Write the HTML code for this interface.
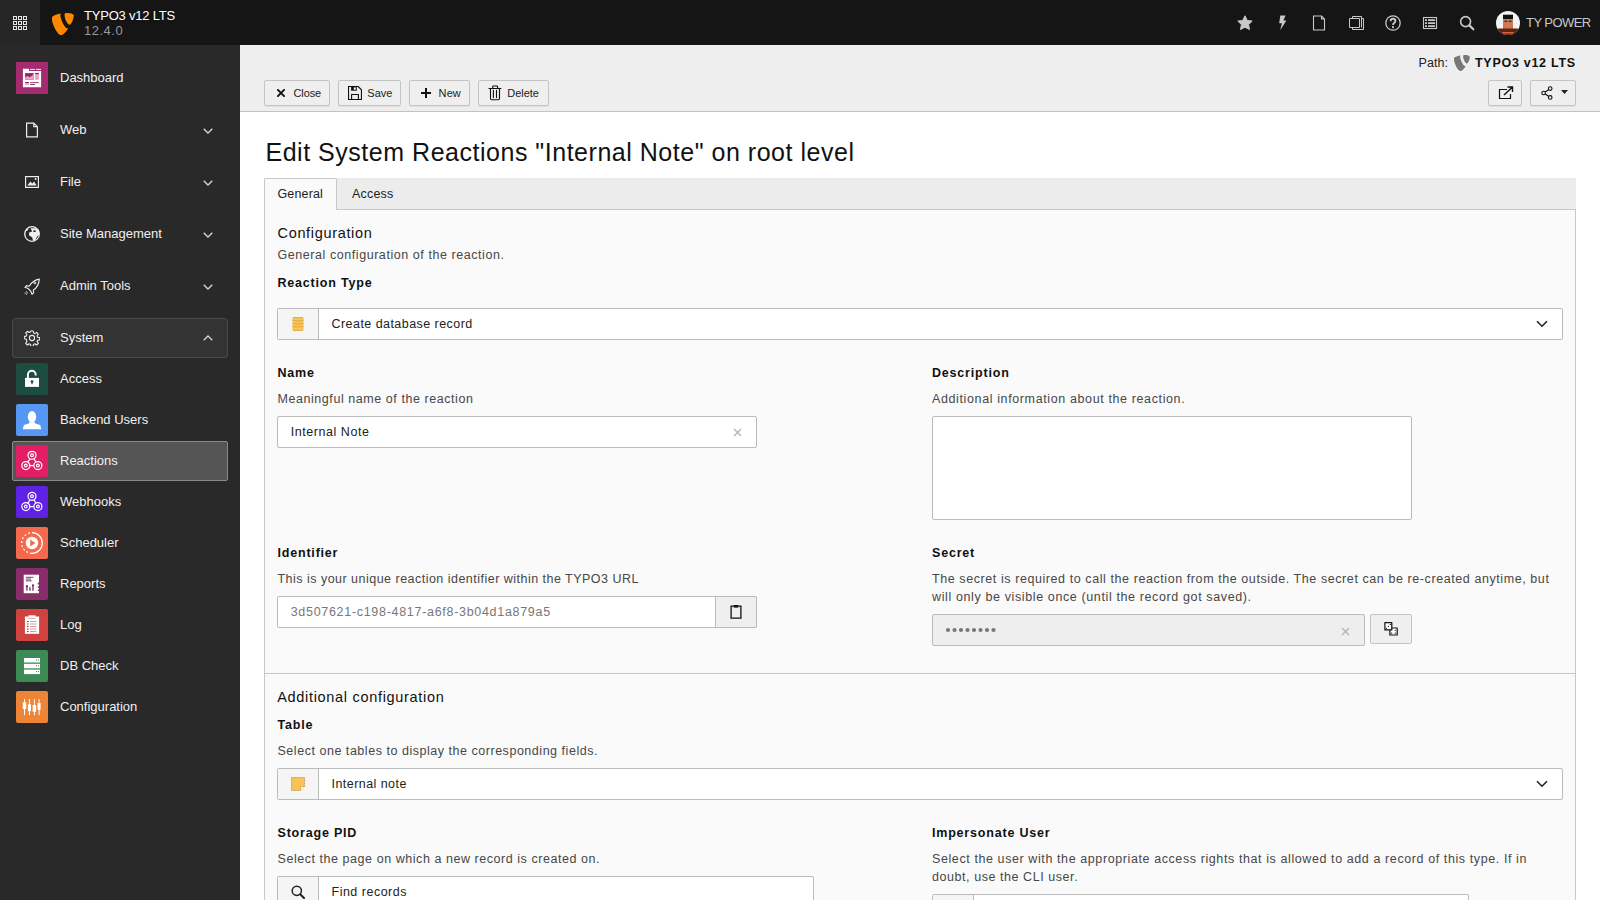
<!DOCTYPE html>
<html><head><meta charset="utf-8">
<style>
*{box-sizing:border-box;margin:0;padding:0}
html,body{width:1600px;height:900px;overflow:hidden;background:#fff;font-family:"Liberation Sans",sans-serif;}
.abs{position:absolute}
#top{position:absolute;left:0;top:0;width:1600px;height:45px;background:#151515}
#grid{position:absolute;left:0;top:0;width:40px;height:45px;background:#262626}
#side{position:absolute;left:0;top:45px;width:240px;height:855px;background:#292929}
.mi{position:absolute;left:0;width:240px;height:41px}
.mi .ic{position:absolute;left:16px;top:4px;width:32px;height:32px;border-radius:2px}
.mi .lb{position:absolute;left:60px;top:0;line-height:41px;font-size:13px;color:#f4f4f4;white-space:nowrap}
.grp .lb{line-height:40px}
.chev{position:absolute;left:203px;width:10px;height:6px}
#doc{position:absolute;left:240px;top:45px;width:1360px;height:66px;background:#eeeeee;border-bottom:1px solid #c3c3c3}
.btn{position:absolute;height:26px;border:1px solid #c4c4c4;border-radius:2px;background:#f0f0f0;font-size:12px;color:#222;line-height:24px;white-space:nowrap}
.t{position:absolute;white-space:nowrap}
.lab{font-weight:700;font-size:12.5px;color:#1a1a1a;letter-spacing:0.75px}
.desc{font-size:12.5px;color:#555;letter-spacing:0.45px}
.inp{position:absolute;background:#fff;border:1px solid #bbb;border-radius:2px}
</style></head>
<body>
<div id="top">
<svg class="abs" style="left:52px;top:13px" width="22" height="22" viewBox="1.6 1 14.4 14.4"><path fill="#ff8700" d="M12.2 10.9c-.2.1-.4.1-.6.1-1.8 0-4.5-6.3-4.5-8.4 0-.8.2-1 .4-1.2-2.3.3-4.9 1.1-5.7 2.1-.2.3-.3.7-.3 1.2 0 3.3 3.5 10.8 6 10.8 1.2 0 3.2-2 4.7-4.6M11 1c2.4 0 4.8.4 4.8 1.7 0 2.7-1.7 6-2.6 6-1.5 0-3.4-4.2-3.4-6.3 0-1 .4-1.4 1.2-1.4"/></svg>
<div class="t" style="left:84px;top:8px;font-size:13px;color:#fff;letter-spacing:-0.2px;line-height:15px">TYPO3 v12 LTS</div>
<div class="t" style="left:84px;top:23px;font-size:13px;color:#999;letter-spacing:0.5px;line-height:15px">12.4.0</div>
<!-- star -->
<svg class="abs" style="left:1237px;top:15px" width="16" height="16" viewBox="0 0 16 16"><path fill="#c8c8c8" d="M8 .8l2.2 4.6 5 .7-3.6 3.5.9 5-4.5-2.4-4.5 2.4.9-5L.8 6.1l5-.7z" stroke="#c8c8c8" stroke-width="1" stroke-linejoin="round"/></svg>
<!-- bolt -->
<svg class="abs" style="left:1274px;top:15px" width="16" height="16" viewBox="0 0 16 16"><path fill="#c8c8c8" d="M6.3 0.6h5.2L9.4 5.6h3L6.2 15.2l1.7-6.9H5.2z"/></svg>
<!-- page -->
<svg class="abs" style="left:1311px;top:15px" width="16" height="16" viewBox="0 0 16 16"><path fill="none" stroke="#c8c8c8" stroke-width="1.1" d="M2.5 1h8l3 3v11h-11z M10.5 1v3h3"/></svg>
<!-- stack -->
<svg class="abs" style="left:1348px;top:15px" width="16" height="16" viewBox="0 0 16 16"><path fill="none" stroke="#c8c8c8" stroke-width="1" d="M1.5 3.5h10v9h-10z M4.5 3V1.5h9v11 M4.5 13v1.5h11v-11h-1.5"/></svg>
<!-- help -->
<svg class="abs" style="left:1385px;top:15px" width="16" height="16" viewBox="0 0 16 16"><circle cx="8" cy="8" r="7.2" fill="none" stroke="#c8c8c8" stroke-width="1.3"/><path fill="none" stroke="#c8c8c8" stroke-width="1.9" d="M5.6 6.2c0-1.5 1.1-2.4 2.4-2.4s2.4.9 2.4 2.2c0 1.6-2.3 1.7-2.3 3.4v.5"/><rect x="7" y="11.2" width="2" height="1.9" fill="#c8c8c8"/></svg>
<!-- list -->
<svg class="abs" style="left:1422px;top:15px" width="16" height="16" viewBox="0 0 16 16"><rect x="1.5" y="2.5" width="13" height="11" fill="none" stroke="#c8c8c8" stroke-width="1.1"/><path fill="#c8c8c8" d="M3 4.2h2v1.7H3zM6 4.2h7v1.7H6zM3 7.2h2v1.7H3zM6 7.2h7v1.7H6zM3 10.2h2v1.7H3zM6 10.2h7v1.7H6z"/></svg>
<!-- search -->
<svg class="abs" style="left:1459px;top:15px" width="16" height="16" viewBox="0 0 16 16"><circle cx="6.6" cy="6.6" r="5" fill="none" stroke="#c8c8c8" stroke-width="1.6"/><path stroke="#c8c8c8" stroke-width="2.2" stroke-linecap="round" d="M10.4 10.4l3.9 3.9"/></svg>
<!-- avatar -->
<svg class="abs" style="left:1496px;top:11px" width="24" height="24" viewBox="0 0 24 24"><defs><clipPath id="av"><circle cx="12" cy="12" r="12"/></clipPath></defs><g clip-path="url(#av)"><rect width="24" height="24" fill="#f3f3f3"/><rect x="7" y="3.7" width="10" height="4.6" fill="#121212"/><rect x="7" y="8.2" width="10" height="10" fill="#c47a5a"/><rect x="8.5" y="9.6" width="2.6" height="1.3" fill="#4a2010"/><rect x="12.8" y="9.6" width="2.6" height="1.3" fill="#4a2010"/><rect x="10" y="12" width="4" height="4" fill="#e07a3a"/><path d="M2 17.5h20V24H2z" fill="#5e2410"/><rect x="6.5" y="21" width="11" height="1.5" fill="#e2603a"/></g></svg>
<div class="t" style="left:1526px;top:16px;font-size:13px;color:#c8c8c8;line-height:14px;letter-spacing:-0.55px">TY POWER</div>
</div>
<div id="grid"><svg class="abs" style="left:13px;top:16px" width="14" height="14" viewBox="0 0 14 14" shape-rendering="crispEdges"><g fill="none" stroke="#e6e6e6" stroke-width="1">
<rect x="0.5" y="0.5" width="3" height="3"/><rect x="5.5" y="0.5" width="3" height="3"/><rect x="10.5" y="0.5" width="3" height="3"/>
<rect x="0.5" y="5.5" width="3" height="3"/><rect x="5.5" y="5.5" width="3" height="3"/><rect x="10.5" y="5.5" width="3" height="3"/>
<rect x="0.5" y="10.5" width="3" height="3"/><rect x="5.5" y="10.5" width="3" height="3"/><rect x="10.5" y="10.5" width="3" height="3"/></g></svg></div>
<div id="side"></div><div class="abs" style="left:16px;top:62px;width:32px;height:32px;background:#a62a6f"><svg width="32" height="32" viewBox="0 0 32 32"><path d="M6.9 6.7h6.2v2.2h12v16.4H6.9z" fill="#fff"/><rect x="14.2" y="6.9" width="4.7" height="0.9" fill="#fff"/><rect x="20" y="6.9" width="5.1" height="0.9" fill="#fff"/><rect x="9.1" y="11.1" width="8.7" height="6.7" fill="#8f2a62"/><path d="M9.1 17.8v-2.5l2.5-1.2 2 1.2 2.5-1.5 1.7-2.5v6.5z" fill="#e9a3c9"/><rect x="19.1" y="11.1" width="3.8" height="6.7" fill="#e9a3c9"/><rect x="19.1" y="11.1" width="3.8" height="1" fill="#6e2a4e"/><rect x="9.1" y="20" width="3.8" height="2.9" fill="#e9a3c9"/><rect x="9.1" y="20" width="3.8" height="1" fill="#8f2a62"/><rect x="14.2" y="20.2" width="8.7" height="0.9" fill="#8f2a62"/><rect x="14.2" y="22.1" width="4.7" height="0.9" fill="#6e2a4e"/></svg></div><div class="t" style="left:60px;top:69.7px;font-size:13px;color:#f0f0f0;line-height:16px">Dashboard</div><svg class="abs" style="left:25px;top:122px" width="14" height="16" viewBox="0 0 14 16"><path d="M1.6 1.1h7.2l3.6 3.6v10.2H1.6z M8.8 1.1v3.6h3.6" fill="none" stroke="#eee" stroke-width="1.2"/></svg><div class="t" style="left:60px;top:121.7px;font-size:13px;color:#f0f0f0;line-height:16px">Web</div><svg class="abs" style="left:203px;top:128px" width="10" height="6" viewBox="0 0 10 6"><path d="M0.7 0.7L5 5 9.3 0.7" fill="none" stroke="#d6d6d6" stroke-width="1.3"/></svg><svg class="abs" style="left:25px;top:176px" width="14" height="12" viewBox="0 0 14 12"><rect x=".6" y=".6" width="12.8" height="10.8" fill="none" stroke="#eee" stroke-width="1.2"/><path d="M2.3 9.6l3.1-4.2 1.9 2.1 1.8-2.1 2.6 4.2z" fill="#eee"/><circle cx="10.6" cy="2.9" r="1" fill="#eee"/></svg><div class="t" style="left:60px;top:173.7px;font-size:13px;color:#f0f0f0;line-height:16px">File</div><svg class="abs" style="left:203px;top:180px" width="10" height="6" viewBox="0 0 10 6"><path d="M0.7 0.7L5 5 9.3 0.7" fill="none" stroke="#d6d6d6" stroke-width="1.3"/></svg><svg class="abs" style="left:24px;top:226px" width="16" height="16" viewBox="0 0 16 16"><circle cx="8" cy="8" r="7.3" fill="none" stroke="#eee" stroke-width="1.3"/><path d="M6.4 2.2L11.5 2.3 14.9 3.8 15.6 8.2 13.1 10.4 11.3 14 9.1 14.9 8.2 11.3 5.1 9.6 5.1 6.4 8.2 5.6 7.3 3.8z" fill="#eee"/><path d="M9.4 4.2l2.6.4-.6 1.3-2 .1z" fill="#2a2a2a"/><path d="M1.6 3.8L4 2.2 4.4 3.6 2.4 5.2z" fill="#eee"/></svg><div class="t" style="left:60px;top:225.7px;font-size:13px;color:#f0f0f0;line-height:16px">Site Management</div><svg class="abs" style="left:203px;top:232px" width="10" height="6" viewBox="0 0 10 6"><path d="M0.7 0.7L5 5 9.3 0.7" fill="none" stroke="#d6d6d6" stroke-width="1.3"/></svg><svg class="abs" style="left:24px;top:278px" width="16" height="17" viewBox="0 0 16 17"><path d="M15.3 1.1C11 1.5 7.5 4.5 5.2 8.2L2.6 7.6.9 9.3 4.2 10.6 6.6 13 8 16.3 9.7 14.6 9.3 12C13 9.8 15 6 15.3 1.1z" fill="none" stroke="#eee" stroke-width="1.1" stroke-linejoin="round"/><circle cx="10.9" cy="4.9" r="1" fill="none" stroke="#eee" stroke-width="1"/><g fill="#eee"><rect x=".6" y="14.6" width="1" height="1"/><rect x="1.8" y="13.4" width="1" height="1"/><rect x="1.9" y="15.6" width="1" height="1"/><rect x="3.1" y="14.4" width="1" height="1"/></g></svg><div class="t" style="left:60px;top:277.7px;font-size:13px;color:#f0f0f0;line-height:16px">Admin Tools</div><svg class="abs" style="left:203px;top:284px" width="10" height="6" viewBox="0 0 10 6"><path d="M0.7 0.7L5 5 9.3 0.7" fill="none" stroke="#d6d6d6" stroke-width="1.3"/></svg><div class="abs" style="left:12px;top:318px;width:216px;height:40px;background:#333333;border:1px solid #4a4a4a;border-radius:3px"></div><div class="t" style="left:60px;top:329.7px;font-size:13px;color:#f0f0f0;line-height:16px">System</div><svg class="abs" style="left:24px;top:330px" width="16" height="16" viewBox="0 0 16 16"><path d="M6.8 1h2.4l.4 2 1.3.6 1.7-1.2 1.7 1.7-1.2 1.7.6 1.4 2 .3v2.4l-2 .4-.6 1.3 1.2 1.7-1.7 1.7-1.7-1.2-1.3.6-.4 2H6.8l-.4-2-1.3-.6-1.7 1.2-1.7-1.7 1.2-1.7L2.3 9.2l-2-.4V6.4l2-.3.6-1.4-1.2-1.7 1.7-1.7 1.7 1.2 1.3-.6z" fill="none" stroke="#eee" stroke-width="1.1" stroke-linejoin="round"/><circle cx="8" cy="8" r="2.6" fill="none" stroke="#eee" stroke-width="1.1"/></svg><svg class="abs" style="left:203px;top:335px" width="10" height="6" viewBox="0 0 10 6"><path d="M0.7 5.3L5 1 9.3 5.3" fill="none" stroke="#d6d6d6" stroke-width="1.3"/></svg><div class="abs" style="left:12px;top:441px;width:216px;height:40px;background:#555555;border:1px solid #8a8a8a;border-radius:2px"></div><div class="abs" style="left:16px;top:363px;width:32px;height:32px;background:#1d4c40;border-radius:2px"><svg width="32" height="32" viewBox="0 0 32 32"><rect x="9" y="14.9" width="14" height="9" fill="#fff"/><path d="M11.9 14.9v-3.2a3.9 3.9 0 0 1 7.8 0v.9" fill="none" stroke="#fff" stroke-width="1.9"/><circle cx="16" cy="18.6" r="1.4" fill="#1d4c40"/><rect x="15.4" y="18.6" width="1.2" height="2.6" fill="#1d4c40"/></svg></div><div class="t" style="left:60px;top:371.2px;font-size:13px;color:#f0f0f0;line-height:16px">Access</div><div class="abs" style="left:16px;top:404px;width:32px;height:32px;background:#5597f3;border-radius:2px"><svg width="32" height="32" viewBox="0 0 32 32"><ellipse cx="16" cy="12.8" rx="4.2" ry="5.9" fill="#fff"/><path d="M13.3 18.2h5.4l.6 1.4 4.9 1.5 1.1 4.2H6.8l1.1-4.2 4.9-1.5z" fill="#fff"/></svg></div><div class="t" style="left:60px;top:412.2px;font-size:13px;color:#f0f0f0;line-height:16px">Backend Users</div><div class="abs" style="left:16px;top:445px;width:32px;height:32px;background:#e21f63;border-radius:2px"><svg width="32" height="32" viewBox="0 0 32 32"><g fill="none" stroke="#fff" stroke-width="1.2"><circle cx="16" cy="10.3" r="4"/><circle cx="9.8" cy="20.6" r="4"/><circle cx="21.9" cy="20.6" r="4"/><path d="M14 13.8l-2.2 3.4M13.8 20.6h4.1M18 13.8l2 3.4"/><circle cx="16" cy="10.3" r="1.4"/><circle cx="9.8" cy="20.6" r="1.4"/><circle cx="21.9" cy="20.6" r="1.4"/></g></svg></div><div class="t" style="left:60px;top:453.2px;font-size:13px;color:#f0f0f0;line-height:16px">Reactions</div><div class="abs" style="left:16px;top:486px;width:32px;height:32px;background:#5f21e4;border-radius:2px"><svg width="32" height="32" viewBox="0 0 32 32"><g fill="none" stroke="#fff" stroke-width="1.2"><circle cx="16" cy="10.3" r="4"/><circle cx="9.8" cy="20.6" r="4"/><circle cx="21.9" cy="20.6" r="4"/><path d="M14 13.8l-2.2 3.4M13.8 20.6h4.1M18 13.8l2 3.4"/><circle cx="16" cy="10.3" r="1.4"/><circle cx="9.8" cy="20.6" r="1.4"/><circle cx="21.9" cy="20.6" r="1.4"/></g></svg></div><div class="t" style="left:60px;top:494.2px;font-size:13px;color:#f0f0f0;line-height:16px">Webhooks</div><div class="abs" style="left:16px;top:527px;width:32px;height:32px;background:#f5694e;border-radius:2px"><svg width="32" height="32" viewBox="0 0 32 32"><path d="M16 5.7a10.3 10.3 0 0 1 0 20.6" fill="none" stroke="#fff" stroke-width="1.2"/><path d="M16 26.3a10.3 10.3 0 0 1 0-20.6" fill="none" stroke="#fff" stroke-width="1.2" stroke-dasharray="2 2"/><circle cx="16" cy="16" r="6.2" fill="#fff"/><path d="M14.2 12.6v6.8l5.2-3.4z" fill="#f5694e"/></svg></div><div class="t" style="left:60px;top:535.2px;font-size:13px;color:#f0f0f0;line-height:16px">Scheduler</div><div class="abs" style="left:16px;top:568px;width:32px;height:32px;background:#8a2c6a;border-radius:2px"><svg width="32" height="32" viewBox="0 0 32 32"><rect x="7.7" y="6.7" width="15.3" height="18.5" fill="#fff"/><rect x="9.8" y="8.8" width="7.7" height="0.9" fill="#6b2452"/><rect x="9.8" y="10.6" width="5.2" height="0.9" fill="#6b2452"/><rect x="9.8" y="12.4" width="5.8" height="0.9" fill="#6b2452"/><rect x="9.9" y="17.5" width="2" height="5.2" fill="#a07090"/><rect x="9.9" y="17.5" width="2" height="1.5" fill="#5a2046"/><rect x="13" y="19.2" width="2" height="3.5" fill="#a07090"/><rect x="16" y="16.6" width="2" height="6.1" fill="#a07090"/><rect x="16" y="16.6" width="2" height="1.2" fill="#5a2046"/><rect x="21.8" y="14.5" width="1.2" height="2" fill="#8a2c6a"/><rect x="21.8" y="18.3" width="1.2" height="1.6" fill="#8a2c6a"/><rect x="21.8" y="21.5" width="1.2" height="1.6" fill="#8a2c6a"/></svg></div><div class="t" style="left:60px;top:576.2px;font-size:13px;color:#f0f0f0;line-height:16px">Reports</div><div class="abs" style="left:16px;top:609px;width:32px;height:32px;background:#cf4240;border-radius:2px"><svg width="32" height="32" viewBox="0 0 32 32"><rect x="8.9" y="7.5" width="14.2" height="17.3" fill="#fff"/><rect x="12.5" y="6.3" width="7" height="2.2" fill="#fff"/><rect x="12.3" y="9" width="7.4" height="0.8" fill="#d9a0a0"/><g fill="#8a3a3a"><rect x="11" y="12" width="1.6" height="1"/><rect x="11" y="14.5" width="1.6" height="1"/><rect x="11" y="17" width="1.6" height="1"/><rect x="11" y="19.5" width="1.6" height="1"/><rect x="11" y="22" width="1.6" height="1"/></g><g fill="#c9a0a0"><rect x="14" y="12" width="6.5" height="1"/><rect x="14" y="14.5" width="6.5" height="1"/><rect x="14" y="17" width="6.5" height="1"/><rect x="14" y="19.5" width="6.5" height="1"/><rect x="14" y="22" width="6.5" height="1"/></g></svg></div><div class="t" style="left:60px;top:617.2px;font-size:13px;color:#f0f0f0;line-height:16px">Log</div><div class="abs" style="left:16px;top:650px;width:32px;height:32px;background:#3d8a56;border-radius:2px"><svg width="32" height="32" viewBox="0 0 32 32"><g fill="#fff"><rect x="8" y="8" width="16" height="4.5"/><rect x="8" y="13.8" width="16" height="4.5"/><rect x="8" y="19.6" width="16" height="4.5"/></g><g fill="#3d8a56"><rect x="20" y="9.5" width="1" height="1"/><rect x="22" y="9.5" width="1" height="1"/><rect x="20" y="15.3" width="1" height="1"/><rect x="22" y="15.3" width="1" height="1"/><rect x="20" y="21.1" width="1" height="1"/><rect x="22" y="21.1" width="1" height="1"/></g></svg></div><div class="t" style="left:60px;top:658.2px;font-size:13px;color:#f0f0f0;line-height:16px">DB Check</div><div class="abs" style="left:16px;top:691px;width:32px;height:32px;background:#ee8536;border-radius:2px"><svg width="32" height="32" viewBox="0 0 32 32"><g fill="#fff"><rect x="8" y="8" width="1" height="16.2"/><rect x="12.9" y="8" width="1" height="16.2"/><rect x="17.9" y="8" width="1" height="16.2"/><rect x="22.6" y="8" width="1" height="16.2"/><rect x="6.8" y="11.3" width="3.4" height="6.8"/><rect x="11.9" y="13.3" width="3.1" height="6.8"/><rect x="16.6" y="14" width="3.5" height="6.8"/><rect x="21.5" y="12" width="3.1" height="6.8"/></g></svg></div><div class="t" style="left:60px;top:699.2px;font-size:13px;color:#f0f0f0;line-height:16px">Configuration</div><div class="abs" style="left:240px;top:45px;width:1360px;height:67px;background:#eeeeee;border-bottom:1px solid #c3c3c3"></div><div class="abs" style="left:264px;top:80px;width:66px;height:26px;background:#efefef;border:1px solid #c4c4c4;border-radius:2px;box-shadow:0 1px 0 rgba(0,0,0,0.06)"></div><div class="abs" style="left:338px;top:80px;width:63px;height:26px;background:#efefef;border:1px solid #c4c4c4;border-radius:2px;box-shadow:0 1px 0 rgba(0,0,0,0.06)"></div><div class="abs" style="left:409px;top:80px;width:61px;height:26px;background:#efefef;border:1px solid #c4c4c4;border-radius:2px;box-shadow:0 1px 0 rgba(0,0,0,0.06)"></div><div class="abs" style="left:478px;top:80px;width:71px;height:26px;background:#efefef;border:1px solid #c4c4c4;border-radius:2px;box-shadow:0 1px 0 rgba(0,0,0,0.06)"></div><svg class="abs" style="left:277px;top:89px" width="8" height="8" viewBox="0 0 8 8"><path d="M0.9 0.9l6.2 6.2M7.1 0.9L0.9 7.1" stroke="#111" stroke-width="1.9" stroke-linecap="square"/></svg><div class="t" style="left:293.5px;top:88.29px;font-size:11px;line-height:11px;color:#222;font-weight:400;letter-spacing:-0.1px;">Close</div><svg class="abs" style="left:348px;top:86px" width="14" height="14" viewBox="0 0 14 14"><path d="M.55.55h9.7l3.2 3.2v9.7H.55z" fill="none" stroke="#111" stroke-width="1.1"/><path d="M3.1.5h5.7v4.2H3.1z" fill="#111"/><rect x="5.8" y="1.4" width="2" height="2.3" fill="#fff"/><path d="M3.6 13.4V8.55h6.8V13.4" fill="none" stroke="#111" stroke-width="1.1"/></svg><div class="t" style="left:367.3px;top:88.29px;font-size:11px;line-height:11px;color:#222;font-weight:400;letter-spacing:0px;">Save</div><svg class="abs" style="left:421px;top:88px" width="10" height="10" viewBox="0 0 10 10"><path d="M5 0v10M0 5h10" stroke="#111" stroke-width="2"/></svg><div class="t" style="left:438.6px;top:88.29px;font-size:11px;line-height:11px;color:#222;font-weight:400;letter-spacing:0.1px;">New</div><svg class="abs" style="left:488px;top:85px" width="14" height="16" viewBox="0 0 14 16"><path d="M1 3.5h11.9" stroke="#111" stroke-width="1.2" stroke-linecap="round"/><path d="M4.7 3.3V1.7q0-.7.7-.7h3.5q.7 0 .7.7v1.6M2.5 3.6v9.9q0 1.2 1.2 1.2h6.6q1.2 0 1.2-1.2V3.6" fill="none" stroke="#111" stroke-width="1.1"/><path d="M5.4 5.2v7.4M8.5 5.2v7.4" stroke="#111" stroke-width="1.1" stroke-linecap="round"/></svg><div class="t" style="left:507.2px;top:88.29px;font-size:11px;line-height:11px;color:#222;font-weight:400;letter-spacing:0px;">Delete</div><div class="t" style="left:1418.5px;top:57.22px;font-size:12.5px;line-height:12.5px;color:#222;font-weight:400;letter-spacing:0.1px;">Path:</div><svg class="abs" style="left:1454px;top:55px" width="16" height="16" viewBox="1.6 1 14.4 14.4"><path fill="#777" d="M12.2 10.9c-.2.1-.4.1-.6.1-1.8 0-4.5-6.3-4.5-8.4 0-.8.2-1 .4-1.2-2.3.3-4.9 1.1-5.7 2.1-.2.3-.3.7-.3 1.2 0 3.3 3.5 10.8 6 10.8 1.2 0 3.2-2 4.7-4.6M11 1c2.4 0 4.8.4 4.8 1.7 0 2.7-1.7 6-2.6 6-1.5 0-3.4-4.2-3.4-6.3 0-1 .4-1.4 1.2-1.4"/></svg><div class="t" style="left:1475px;top:57.22px;font-size:12.5px;line-height:12.5px;color:#111;font-weight:700;letter-spacing:0.72px;">TYPO3 v12 LTS</div><div class="abs" style="left:1488px;top:80px;width:34px;height:26px;background:#efefef;border:1px solid #c4c4c4;border-radius:2px;box-shadow:0 1px 0 rgba(0,0,0,0.06)"></div><div class="abs" style="left:1530px;top:80px;width:46px;height:26px;background:#efefef;border:1px solid #c4c4c4;border-radius:2px;box-shadow:0 1px 0 rgba(0,0,0,0.06)"></div><svg class="abs" style="left:1498px;top:86px" width="16" height="14" viewBox="0 0 16 14"><path d="M9 3.5H1.5v9h11V8" fill="none" stroke="#111" stroke-width="1.2"/><path d="M6 9L14 1.5M9.5 1h5v5" fill="none" stroke="#111" stroke-width="1.4"/></svg><svg class="abs" style="left:1541px;top:86px" width="12" height="14" viewBox="0 0 12 14"><circle cx="9.2" cy="2.6" r="1.8" fill="none" stroke="#111" stroke-width="1.1"/><circle cx="2.6" cy="7" r="1.8" fill="none" stroke="#111" stroke-width="1.1"/><circle cx="9.2" cy="11.4" r="1.8" fill="none" stroke="#111" stroke-width="1.1"/><path d="M4.2 6l3.4-2.3M4.2 8l3.4 2.3" stroke="#111" stroke-width="1.1"/></svg><svg class="abs" style="left:1561px;top:90px" width="7" height="4" viewBox="0 0 7 4"><path d="M0 0h7L3.5 4z" fill="#222"/></svg><div class="t" style="left:265.5px;top:140.24px;font-size:25px;line-height:25px;color:#111;font-weight:400;letter-spacing:0.52px;">Edit System Reactions "Internal Note" on root level</div><div class="abs" style="left:264px;top:178px;width:1312px;height:32px;background:#ececec;border-bottom:1px solid #c8c8c8"></div><div class="abs" style="left:264px;top:210px;width:1312px;height:700px;background:#fafafa;border:1px solid #c8c8c8;border-top:none"></div><div class="abs" style="left:264px;top:178px;width:73px;height:32px;background:#fafafa;border:1px solid #c8c8c8;border-bottom:none;border-radius:2px 2px 0 0"></div><div class="t" style="left:277.5px;top:188.12px;font-size:12.5px;line-height:12.5px;color:#222;font-weight:400;letter-spacing:0.14px;">General</div><div class="t" style="left:352px;top:188.12px;font-size:12.5px;line-height:12.5px;color:#222;font-weight:400;letter-spacing:0.2px;">Access</div><div class="t" style="left:277.5px;top:226.43px;font-size:14.5px;line-height:14.5px;color:#111;font-weight:400;letter-spacing:0.67px;">Configuration</div><div class="t" style="left:277.5px;top:249.22px;font-size:12.5px;line-height:12.5px;color:#474747;font-weight:400;letter-spacing:0.56px;">General configuration of the reaction.</div><div class="t" style="left:277.5px;top:277.22px;font-size:12.5px;line-height:12.5px;color:#111;font-weight:700;letter-spacing:0.8px;">Reaction Type</div><div class="abs" style="left:277px;top:308px;width:1286px;height:32px;background:#fff;border:1px solid #bbb;border-radius:2px;"></div><div class="abs" style="left:278px;top:309px;width:41px;height:30px;background:#f5f5f5;border-right:1px solid #bbb"></div><svg class="abs" style="left:292px;top:317px" width="12" height="14" viewBox="0 0 12 14"><rect x=".3" y=".3" width="11.4" height="13.4" rx="2" fill="#f8c65a"/><path d="M.8 .8q5.2-1 10.4 0M.8 3.4q5.2 1.4 10.4 0M.8 6.4q5.2 1.4 10.4 0M.8 9.4q5.2 1.4 10.4 0M.8 13.2q5.2 1 10.4 0" fill="none" stroke="#d5a03a" stroke-width="0.8"/></svg><div class="t" style="left:331.5px;top:317.52px;font-size:12.5px;line-height:12.5px;color:#222;font-weight:400;letter-spacing:0.45px;">Create database record</div><svg class="abs" style="left:1536px;top:320px" width="12" height="8" viewBox="0 0 12 8"><path d="M1 1.2l5 5 5-5" fill="none" stroke="#222" stroke-width="1.6"/></svg><div class="t" style="left:277.5px;top:367.02px;font-size:12.5px;line-height:12.5px;color:#111;font-weight:700;letter-spacing:0.8px;">Name</div><div class="t" style="left:277.5px;top:392.92px;font-size:12.5px;line-height:12.5px;color:#474747;font-weight:400;letter-spacing:0.56px;">Meaningful name of the reaction</div><div class="abs" style="left:277px;top:416px;width:480px;height:32px;background:#fff;border:1px solid #bbb;border-radius:2px;"></div><div class="t" style="left:290.7px;top:426.12px;font-size:12.5px;line-height:12.5px;color:#222;font-weight:400;letter-spacing:0.55px;">Internal Note</div><svg class="abs" style="left:732.5px;top:428px" width="9" height="9" viewBox="0 0 9 9"><path d="M1 1l7 7M8 1L1 8" stroke="#b4b4b4" stroke-width="1.4"/></svg><div class="t" style="left:932px;top:367.02px;font-size:12.5px;line-height:12.5px;color:#111;font-weight:700;letter-spacing:0.8px;">Description</div><div class="t" style="left:932px;top:392.92px;font-size:12.5px;line-height:12.5px;color:#474747;font-weight:400;letter-spacing:0.62px;">Additional information about the reaction.</div><div class="abs" style="left:932px;top:416px;width:480px;height:104px;background:#fff;border:1px solid #bbb;border-radius:2px;"></div><div class="t" style="left:277.5px;top:547.02px;font-size:12.5px;line-height:12.5px;color:#111;font-weight:700;letter-spacing:0.8px;">Identifier</div><div class="t" style="left:277.5px;top:572.92px;font-size:12.5px;line-height:12.5px;color:#474747;font-weight:400;letter-spacing:0.48px;">This is your unique reaction identifier within the TYPO3 URL</div><div class="abs" style="left:277px;top:596px;width:480px;height:32px;background:#fff;border:1px solid #bbb;border-radius:2px;"></div><div class="abs" style="left:715px;top:596px;width:42px;height:32px;background:#efefef;border:1px solid #bbb;border-radius:0 2px 2px 0"></div><div class="t" style="left:290.7px;top:606.02px;font-size:12.5px;line-height:12.5px;color:#777;font-weight:400;letter-spacing:0.7px;">3d507621-c198-4817-a6f8-3b04d1a879a5</div><svg class="abs" style="left:730px;top:604px" width="12" height="15" viewBox="0 0 12 15"><path d="M3.5 2.2H1.1v12h9.8v-12H8.5" fill="none" stroke="#111" stroke-width="1.3"/><rect x="3.5" y="1" width="5" height="2.6" fill="#111"/></svg><div class="t" style="left:932px;top:547.12px;font-size:12.5px;line-height:12.5px;color:#111;font-weight:700;letter-spacing:0.8px;">Secret</div><div class="t" style="left:932px;top:572.97px;font-size:12.5px;line-height:12.5px;color:#474747;font-weight:400;letter-spacing:0.58px;">The secret is required to call the reaction from the outside. The secret can be re-created anytime, but</div><div class="t" style="left:932px;top:591.12px;font-size:12.5px;line-height:12.5px;color:#474747;font-weight:400;letter-spacing:0.62px;">will only be visible once (until the record got saved).</div><div class="abs" style="left:932px;top:614px;width:433px;height:32px;background:#eeeeee;border:1px solid #bbb;border-radius:2px;"></div><svg class="abs" style="left:945px;top:627px" width="54" height="6" viewBox="0 0 54 6"><circle cx="3.0" cy="3" r="2.1" fill="#777"/><circle cx="9.5" cy="3" r="2.1" fill="#777"/><circle cx="16.0" cy="3" r="2.1" fill="#777"/><circle cx="22.5" cy="3" r="2.1" fill="#777"/><circle cx="29.0" cy="3" r="2.1" fill="#777"/><circle cx="35.5" cy="3" r="2.1" fill="#777"/><circle cx="42.0" cy="3" r="2.1" fill="#777"/><circle cx="48.5" cy="3" r="2.1" fill="#777"/></svg><svg class="abs" style="left:1340.5px;top:626.5px" width="9" height="9" viewBox="0 0 9 9"><path d="M1 1l7 7M8 1L1 8" stroke="#b4b4b4" stroke-width="1.4"/></svg><div class="abs" style="left:1370px;top:614px;width:42px;height:30px;background:#efefef;border:1px solid #c4c4c4;border-radius:2px;"></div><svg class="abs" style="left:1383px;top:621px" width="16" height="16" viewBox="0 0 16 16"><path d="M6.9 7h7.3v7H6.9z" fill="#fff" stroke="#111" stroke-width="1.2" stroke-linejoin="round"/><path d="M1.9 1.6h6.9v7.3H1.9z" fill="#fff" stroke="#111" stroke-width="1.2" stroke-linejoin="round"/><g fill="#111"><circle cx="7.3" cy="3.4" r=".65"/><circle cx="5.4" cy="5.3" r=".65"/><circle cx="3.3" cy="7.3" r=".65"/><circle cx="12.3" cy="9.3" r=".65"/><circle cx="8.7" cy="12.2" r=".65"/><circle cx="12.3" cy="12.2" r=".65"/></g></svg><div class="abs" style="left:265px;top:673px;width:1310px;height:1px;background:#c8c8c8"></div><div class="t" style="left:277.2px;top:690.23px;font-size:14.5px;line-height:14.5px;color:#111;font-weight:400;letter-spacing:0.69px;">Additional configuration</div><div class="t" style="left:277.5px;top:719.22px;font-size:12.5px;line-height:12.5px;color:#111;font-weight:700;letter-spacing:0.8px;">Table</div><div class="t" style="left:277.5px;top:744.97px;font-size:12.5px;line-height:12.5px;color:#474747;font-weight:400;letter-spacing:0.53px;">Select one tables to display the corresponding fields.</div><div class="abs" style="left:277px;top:768px;width:1286px;height:32px;background:#fff;border:1px solid #bbb;border-radius:2px;"></div><div class="abs" style="left:278px;top:769px;width:41px;height:30px;background:#f5f5f5;border-right:1px solid #bbb"></div><svg class="abs" style="left:291px;top:777px" width="14" height="14" viewBox="0 0 14 14"><path d="M.5.5h13v9l-4 4h-9z" fill="#f9c35a" stroke="#a89060" stroke-width="0.9" stroke-dasharray="1 0.7"/><path d="M13.5 9.5h-4v4" fill="#fff" stroke="#e0a530" stroke-width="0.8"/></svg><div class="t" style="left:331.5px;top:777.52px;font-size:12.5px;line-height:12.5px;color:#222;font-weight:400;letter-spacing:0.45px;">Internal note</div><svg class="abs" style="left:1536px;top:780px" width="12" height="8" viewBox="0 0 12 8"><path d="M1 1.2l5 5 5-5" fill="none" stroke="#222" stroke-width="1.6"/></svg><div class="t" style="left:277.5px;top:827.12px;font-size:12.5px;line-height:12.5px;color:#111;font-weight:700;letter-spacing:0.8px;">Storage PID</div><div class="t" style="left:277.5px;top:853.12px;font-size:12.5px;line-height:12.5px;color:#474747;font-weight:400;letter-spacing:0.55px;">Select the page on which a new record is created on.</div><div class="abs" style="left:277px;top:876px;width:537px;height:40px;background:#fff;border:1px solid #bbb;border-radius:2px;"></div><div class="abs" style="left:278px;top:877px;width:41px;height:30px;background:#f5f5f5;border-right:1px solid #bbb"></div><svg class="abs" style="left:291px;top:885px" width="14" height="14" viewBox="0 0 14 14"><circle cx="5.8" cy="5.8" r="4.6" fill="none" stroke="#222" stroke-width="1.5"/><path d="M9.2 9.2l3.8 3.8" stroke="#222" stroke-width="2" stroke-linecap="round"/></svg><div class="t" style="left:331.5px;top:885.62px;font-size:12.5px;line-height:12.5px;color:#222;font-weight:400;letter-spacing:0.5px;">Find records</div><div class="t" style="left:932px;top:827.12px;font-size:12.5px;line-height:12.5px;color:#111;font-weight:700;letter-spacing:0.8px;">Impersonate User</div><div class="t" style="left:932px;top:853.12px;font-size:12.5px;line-height:12.5px;color:#474747;font-weight:400;letter-spacing:0.595px;">Select the user with the appropriate access rights that is allowed to add a record of this type. If in</div><div class="t" style="left:932px;top:871.12px;font-size:12.5px;line-height:12.5px;color:#474747;font-weight:400;letter-spacing:0.56px;">doubt, use the CLI user.</div><div class="abs" style="left:932px;top:894px;width:537px;height:40px;background:#fff;border:1px solid #bbb;border-radius:2px;"></div><div class="abs" style="left:933px;top:895px;width:41px;height:30px;background:#f5f5f5;border-right:1px solid #bbb"></div></body></html>
